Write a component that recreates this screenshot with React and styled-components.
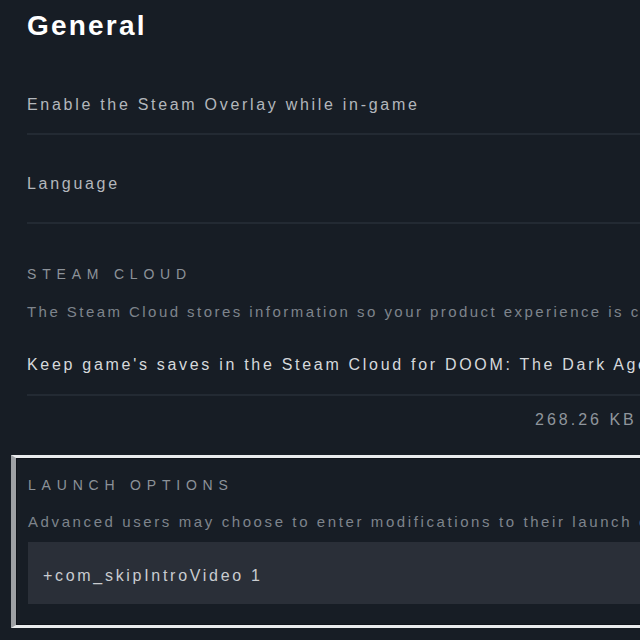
import React from "react";
import styled, { createGlobalStyle } from "styled-components";

const GlobalStyle = createGlobalStyle`
  html, body {
    margin: 0;
    padding: 0;
    background: #171d25;
    overflow: hidden;
  }
  body {
    font-family: "Liberation Sans", Arial, sans-serif;
  }
`;

const App = () => {
  return (
    <>
      <GlobalStyle />
      <Page>
        <Title>General</Title>

        <Row $top={20} $bottom={18}>
          <Label>Enable the Steam Overlay while in-game</Label>
        </Row>
        <Row $top={39} $bottom={28}>
          <Label>Language</Label>
        </Row>

        <Section>
          <Heading>Steam Cloud</Heading>
          <Desc>The Steam Cloud stores information so your product experience is consistent across devices</Desc>
          <Row $top={33} $bottom={19}>
            <Label $bright>Keep game's saves in the Steam Cloud for DOOM: The Dark Ages</Label>
          </Row>
          <Usage>268.26 KB</Usage>
        </Section>

        <LaunchBox>
          <Heading>Launch Options</Heading>
          <Desc>Advanced users may choose to enter modifications to their launch options</Desc>
          <Input defaultValue="+com_skipIntroVideo 1" />
        </LaunchBox>
      </Page>
    </>
  );
};

// styled components

const Page = styled.div`
  width: 760px;
  padding: 9px 0 0 27px;
  display: flex;
  flex-direction: column;
`;

const Title = styled.h1`
  margin: 0 0 32px;
  color: #ffffff;
  font-size: 28px;
  line-height: 34px;
  font-weight: bold;
  letter-spacing: 2.2px;
`;

const Row = styled.div`
  display: flex;
  align-items: center;
  padding: ${(p) => p.$top}px 0 ${(p) => p.$bottom}px;
  border-bottom: 2px solid #232a33;
`;

const Label = styled.span`
  font-size: 16px;
  line-height: 20px;
  letter-spacing: 2.7px;
  color: ${(p) => (p.$bright ? "#d6d9dc" : "#b3b7bc")};
  white-space: nowrap;
`;

const Section = styled.div`
  display: flex;
  flex-direction: column;
  padding-top: 41px;
`;

const Heading = styled.div`
  font-size: 14px;
  line-height: 18px;
  letter-spacing: 5.8px;
  text-transform: uppercase;
  color: #8c9299;
`;

const Desc = styled.div`
  margin-top: 19px;
  font-size: 15px;
  line-height: 20px;
  letter-spacing: 2.45px;
  color: #7e848c;
  white-space: nowrap;
`;

const Usage = styled.div`
  align-self: flex-start;
  margin: 15px 0 0 508px;
  font-size: 16px;
  line-height: 18px;
  letter-spacing: 3px;
  color: #8f959c;
`;

const LaunchBox = styled.div`
  display: flex;
  flex-direction: column;
  margin: 26px 0 0 -16px;
  padding: 18px 12px 21px;
  border: 3px solid #e9ebed;
  border-left: 5px solid #9da0a4;
  border-right: none;
  box-shadow: inset 0 0 0 1px #0f131a;

  ${Desc} {
    margin-top: 18px;
    letter-spacing: 2.6px;
  }
`;

const Input = styled.input`
  margin-top: 10px;
  height: 62px;
  padding: 6px 15px 0;
  box-sizing: border-box;
  border: none;
  outline: none;
  background: #2a2f38;
  color: #c9ccd0;
  font-family: "Liberation Sans", Arial, sans-serif;
  font-size: 16px;
  letter-spacing: 2.7px;
`;

export default App;
